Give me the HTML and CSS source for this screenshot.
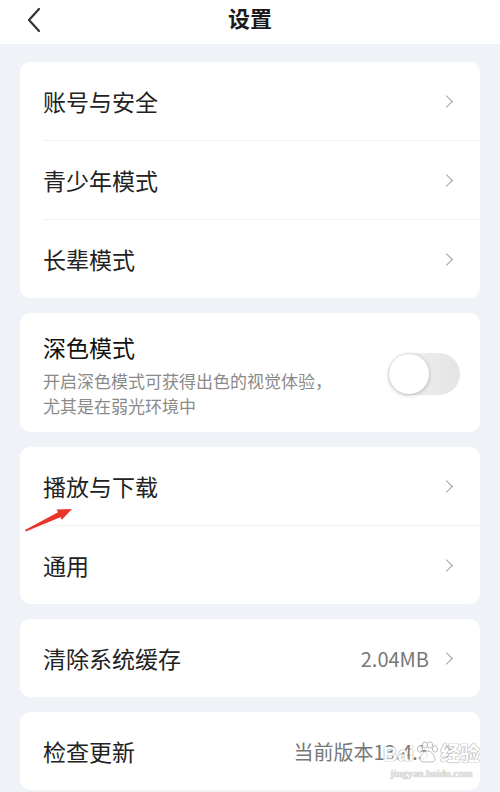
FILE: index.html
```html
<!DOCTYPE html>
<html>
<head>
  <meta charset="utf-8">
  <title>设置</title>
  <link rel="stylesheet" href="styles.css">
</head>
<body>
  <div class="header">
    <div class="back">
      <svg width="16" height="26" viewBox="0 0 16 26"><polyline points="13,2 3,13 13,24" fill="none" stroke="#333" stroke-width="2.2" stroke-linecap="round" stroke-linejoin="round"/></svg>
    </div>
    <h1>设置</h1>
    <div></div>
  </div>

  <div class="main">
    <div class="card">
      <div class="row"><span class="label">账号与安全</span><span class="chev"></span></div>
      <div class="row"><span class="label">青少年模式</span><span class="chev"></span></div>
      <div class="row"><span class="label">长辈模式</span><span class="chev"></span></div>
    </div>

    <div class="card dark-mode">
      <div class="dm-text">
        <div class="dm-title">深色模式</div>
        <div class="dm-sub">开启深色模式可获得出色的视觉体验，<br>尤其是在弱光环境中</div>
      </div>
      <div class="toggle"><div class="knob"></div></div>
    </div>

    <div class="card">
      <div class="row"><span class="label">播放与下载</span><span class="chev"></span></div>
      <div class="row"><span class="label">通用</span><span class="chev"></span></div>
    </div>

    <div class="card">
      <div class="row"><span class="label">清除系统缓存</span><span class="value">2.04MB</span><span class="chev"></span></div>
    </div>

    <div class="card">
      <div class="row"><span class="label">检查更新</span><span class="value">当前版本13.4.5</span><span class="chev"></span></div>
    </div>
  </div>

  <!-- annotation arrow -->
  <svg class="red-arrow" width="60" height="36" viewBox="0 0 60 36">
    <polygon points="1,31 34,13.2 32.6,10.4 48,10 37.8,20.8 36.4,18.2 1.8,32.4" fill="#e8352c"/>
  </svg>

  <div class="watermark">
    <div class="wm-logo">
      <span>Bai</span>
      <svg class="paw" width="24" height="22" viewBox="0 0 24 22">
        <g fill="#fff" stroke="#b8b8b8" stroke-width="1">
          <ellipse cx="5" cy="8" rx="2.6" ry="3.2"/>
          <ellipse cx="10" cy="4" rx="2.6" ry="3.2"/>
          <ellipse cx="15" cy="4" rx="2.6" ry="3.2"/>
          <ellipse cx="20" cy="8" rx="2.6" ry="3.2"/>
          <path d="M12.5 10c-4 0-7.5 5-7.5 8s3 3 7.5 3 7.5 0 7.5-3-3.5-8-7.5-8z"/>
        </g>
      </svg>
      <span>经验</span>
    </div>
    <div class="wm-url">jingyan.baidu.com</div>
  </div>
</body>
</html>
```

FILE: styles.css
```css
body {
  margin: 0;
  background-color: #eff2f7;
  font-family: "Noto Sans CJK SC", "Noto Sans", sans-serif;
  color: #222;
  position: relative;
  height: 792px;
  overflow: hidden;
}

.header {
  height: 44px;
  background: #fff;
  display: grid;
  grid-template-columns: 60px 1fr 60px;
  align-items: center;
}

.back {
  padding-left: 26px;
  display: flex;
  align-items: center;
  margin-top: -4px;
}

.header h1 {
  margin: 0;
  text-align: center;
  font-size: 22px;
  font-weight: 700;
  color: #1a1a1a;
  margin-top: -10px;
}

.main {
  padding: 18px 20px 0 20px;
  display: flex;
  flex-direction: column;
  gap: 15px;
}

.card {
  background: #fff;
  border-radius: 10px;
}

.row {
  margin-left: 23px;
  padding-right: 27px;
  height: 78px;
  display: flex;
  align-items: center;
}

.row + .row {
  border-top: 1px solid #f1f2f5;
}

.label {
  flex: 1;
  font-size: 23px;
  color: #222;
}

.value {
  font-size: 20px;
  color: #777;
  margin-right: 13px;
}

.chev {
  width: 8px;
  height: 8px;
  border-top: 1.6px solid #9a9a9a;
  border-right: 1.6px solid #9a9a9a;
  transform: rotate(45deg);
  margin-right: 2px;
}

.dark-mode {
  display: flex;
  align-items: center;
  padding: 17px 20px 14px 23px;
}

.dm-text {
  flex: 1;
}

.dm-title {
  font-size: 23px;
  font-weight: 400;
  line-height: 34px;
  color: #111;
}

.dm-sub {
  margin-top: 4px;
  font-size: 17px;
  line-height: 25px;
  color: #8a8a8a;
}

.toggle {
  width: 72px;
  height: 42px;
  border-radius: 21px;
  background: linear-gradient(to right, #f2f2f2, #e4e4e4);
  display: flex;
  align-items: center;
  padding: 0 1px;
  box-sizing: border-box;
}

.knob {
  width: 40px;
  height: 40px;
  border-radius: 50%;
  background: #fff;
  box-shadow: 0 1px 4px rgba(0, 0, 0, 0.25);
}

.red-arrow {
  position: absolute;
  left: 24px;
  top: 499px;
}

.watermark {
  position: absolute;
  left: 383px;
  top: 742px;
  color: #fff;
  opacity: 0.9;
  display: flex;
  flex-direction: column;
  align-items: center;
}

.wm-logo {
  display: flex;
  align-items: center;
  gap: 1px;
  font-family: "Liberation Sans", "Noto Sans CJK SC", sans-serif;
  font-size: 20px;
  font-weight: 700;
  line-height: 24px;
  text-shadow: 0 0 1px #999, 0 0 1px #999, 0 0 1px #aaa;
}

.paw {
  margin-top: -4px;
}

.wm-url {
  font-family: "Liberation Serif", serif;
  font-size: 11px;
  line-height: 14px;
  color: #eee;
  text-shadow: 0 0 1px #999, 0 0 1px #aaa;
}
```
